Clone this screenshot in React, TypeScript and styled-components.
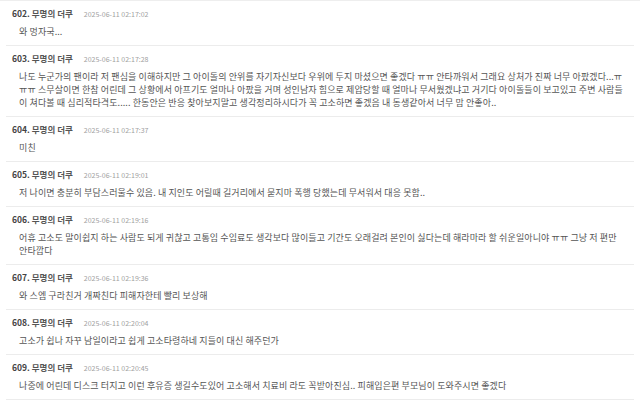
import React from "react";
import styled, { createGlobalStyle } from "styled-components";

const GlobalStyle = createGlobalStyle`
  body {
    margin: 0;
    background: #ffffff;
    font-family: "Noto Sans CJK KR", "Noto Sans", sans-serif;
  }
`

const List = styled.div`
  padding: 0 6px;
  border-top: 1px solid #eeeeee;
  width: 628px;
`

const Item = styled.div`
  display: flex;
  flex-direction: column;
  gap: 6px;
  padding: 6px 0 7px;
  border-bottom: 1px solid #ececec;
`

const Header = styled.div`
  display: flex;
  align-items: baseline;
  gap: 11px;
  padding-left: 6px;
  height: 12px;
  line-height: 12px;
`

const Author = styled.span`
  font-size: 8.5px;
  font-weight: 700;
  color: #555555;
`

const Num = styled.span`
  color: #444444;
`

const Stamp = styled.span`
  font-size: 7px;
  color: #a0a0a0;
`

const Body = styled.div`
  padding-left: 13px;
  padding-right: 11px;
  font-size: 9px;
  letter-spacing: 0.1px;
  line-height: 13px;
  color: #555555;
  word-break: normal;
`

interface Comment {
    no: number
    time: string
    text: string
}

const comments: Comment[] = [
    { no: 602, time: "2025-06-11 02:17:02", text: "와 멍자국..." },
    { no: 603, time: "2025-06-11 02:17:28", text: "나도 누군가의 팬이라 저 팬심을 이해하지만 그 아이돌의 안위를 자기자신보다 우위에 두지 마셨으면 좋겠다 ㅠㅠ 안타까워서 그래요 상처가 진짜 너무 아팠겠다...ㅠㅠㅠ 스무살이면 한참 어린데 그 상황에서 아프기도 얼마나 아팠을 거며 성인남자 힘으로 제압당할 때 얼마나 무서웠겠냐고 거기다 아이돌들이 보고있고 주변 사람들이 쳐다볼 때 심리적타격도..... 한동안은 반응 찾아보지말고 생각정리하시다가 꼭 고소하면 좋겠음 내 동생같아서 너무 맘 안좋아.." },
    { no: 604, time: "2025-06-11 02:17:37", text: "미친" },
    { no: 605, time: "2025-06-11 02:19:01", text: "저 나이면 충분히 부담스러울수 있음. 내 지인도 어릴때 길거리에서 묻지마 폭행 당했는데 무서워서 대응 못함.." },
    { no: 606, time: "2025-06-11 02:19:16", text: "어휴 고소도 말이쉽지 하는 사람도 되게 귀찮고 고통임 수임료도 생각보다 많이들고 기간도 오래걸려 본인이 싫다는데 해라마라 할 쉬운일아니야 ㅠㅠ 그냥 저 편만 안타깝다" },
    { no: 607, time: "2025-06-11 02:19:36", text: "와 스엠 구라친거 개짜친다 피해자한테 빨리 보상해" },
    { no: 608, time: "2025-06-11 02:20:04", text: "고소가 쉽나 자꾸 남일이라고 쉽게 고소타령하네 지들이 대신 해주던가" },
    { no: 609, time: "2025-06-11 02:20:45", text: "나중에 어린데 디스크 터지고 이런 후유증 생길수도있어 고소해서 치료비 라도 꼭받아진심.. 피해입은편 부모님이 도와주시면 좋겠다" },
]

export default function App() {
    return (<>
        <GlobalStyle />
        <List>
            {comments.map(c => (
                <Item key={c.no}>
                    <Header>
                        <Author><Num>{c.no}.</Num> 무명의 더쿠</Author>
                        <Stamp>{c.time}</Stamp>
                    </Header>
                    <Body>{c.text}</Body>
                </Item>
            ))}
        </List>
    </>)
}
